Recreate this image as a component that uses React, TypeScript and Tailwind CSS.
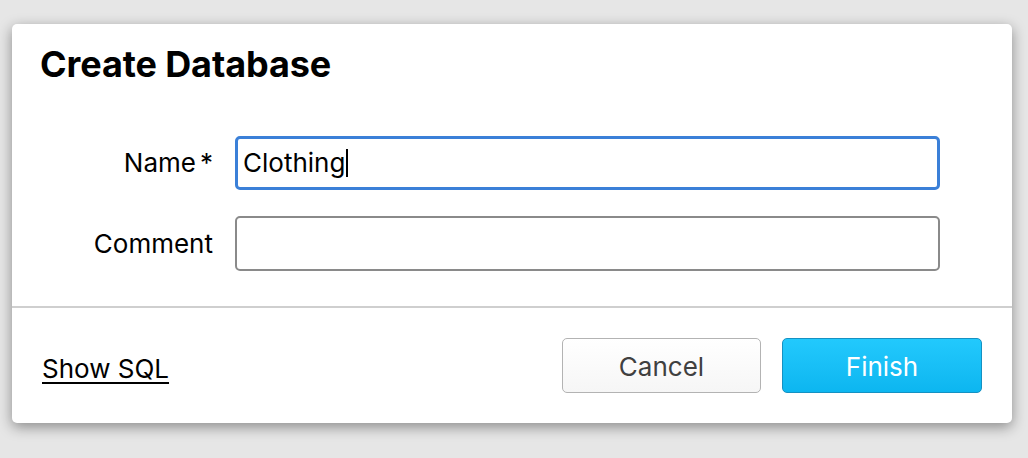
import React from 'react';

export default function App() {
  return (
    <div className="min-h-[458px] w-[1028px] bg-[#e6e6e6] pl-[12px] pt-[24px] font-['Inter',sans-serif] text-black">
      <div className="flex h-[399px] w-[1000px] flex-col rounded-[5px] bg-white shadow-[0_4px_14px_rgba(0,0,0,0.4)]">
        <div className="flex h-[282px] flex-col px-[28px] pt-[19px]">
          <h1 className="text-[36px] font-bold leading-[42px] tracking-[-0.1px]">Create Database</h1>
          <div className="mt-[51px] grid grid-cols-[173px_705px] items-center gap-x-[22px] gap-y-[26px]">
            <label className="text-right text-[26px] leading-[32px]">
              Name<span className="ml-[4px]">*</span>
            </label>
            <div className="flex h-[54px] items-center rounded-[5px] border-[3px] border-[#3b80d8] px-[5px]">
              <span className="text-[26px] leading-[32px]">Clothing</span>
              <span className="ml-[1px] h-[28px] w-[1.5px] bg-black" />
            </div>
            <label className="text-right text-[26px] leading-[32px]">Comment</label>
            <div className="h-[55px] rounded-[5px] border-2 border-[#8a8a8a]" />
          </div>
        </div>
        <div className="h-[2px] bg-[#cfcfcf]" />
        <div className="flex flex-1 items-center justify-between pl-[30px] pr-[30px]">
          <a className="mt-[6px] text-[26px] leading-[32px] underline decoration-[2px] underline-offset-[4px]">Show SQL</a>
          <div className="flex gap-[21px]">
            <button className="h-[55px] w-[199px] rounded-[5px] border-[1.5px] border-[#b3b3b3] bg-gradient-to-b from-white to-[#f6f6f6] pt-[2px] text-[26px] text-[#404040]">
              Cancel
            </button>
            <button className="h-[55px] w-[200px] rounded-[5px] border-[1.5px] border-[#1591c2] bg-gradient-to-b from-[#22c9fd] to-[#0cb6f0] pt-[2px] text-[26px] text-white">
              Finish
            </button>
          </div>
        </div>
      </div>
    </div>
  );
}
